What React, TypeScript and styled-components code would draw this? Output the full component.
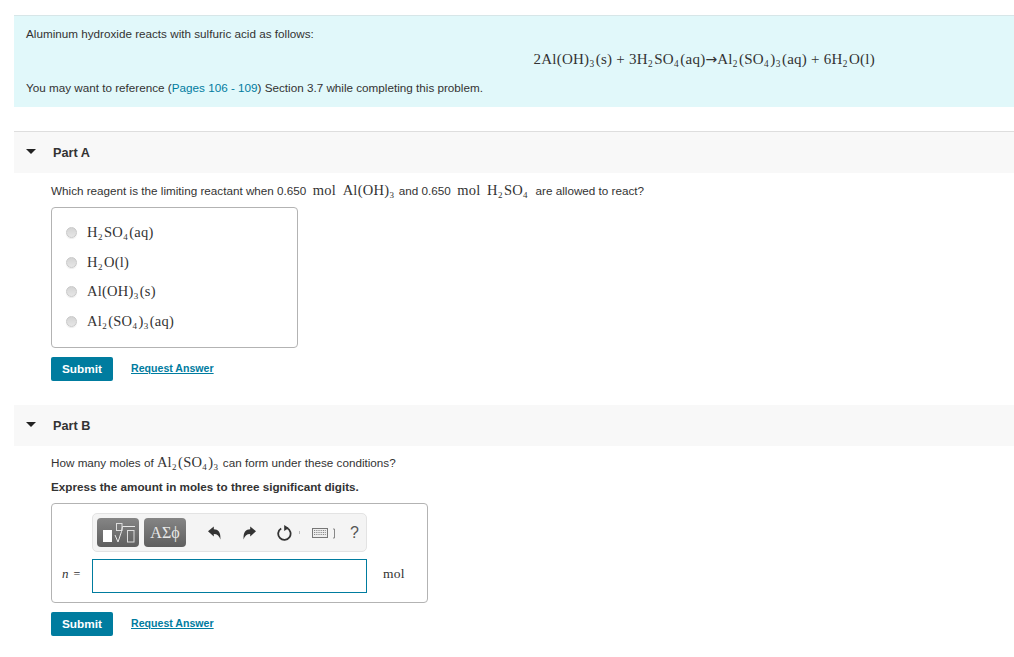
import {FC, ReactNode} from 'react'
import styled, {createGlobalStyle} from 'styled-components'

const teal = '#007c9f'

const Global = createGlobalStyle`
  html, body {
    margin: 0;
    padding: 0;
    background: #fff;
  }
  body {
    font-family: "Liberation Sans", Arial, sans-serif;
    font-size: 11.7px;
    color: #333;
  }
`

const Page = styled.div`
  width: 1014px;
  height: 657px;
  padding: 15px 0 0 14px;
  box-sizing: border-box;
  overflow: hidden;
`

const Intro = styled.section`
  height: 92px;
  box-sizing: border-box;
  background: #e1f8fa;
  border-top: 1px solid #d7e6e8;
  padding: 11px 12px 0;
  line-height: 14px;
`

const Equation = styled.div`
  display: flex;
  justify-content: flex-end;
  padding-right: 127px;
  height: 20px;
  margin-top: 8px;
  line-height: 20px;
`

const Reference = styled.p`
  margin: 12px 0 0;
`

const TextLink = styled.span`
  color: ${teal};
`

const PartHeader = styled.header<{$first?: boolean}>`
  display: flex;
  align-items: center;
  height: ${({$first}) => ($first ? 42 : 41)}px;
  box-sizing: border-box;
  background: #f8f8f8;
  border-top: ${({$first}) => ($first ? '1px solid #dedede' : 'none')};
  margin-top: 24px;
  padding-left: 12px;
  font-size: 12.7px;
  font-weight: 700;
  color: #333;
`

const Caret = styled.span`
  width: 0;
  height: 0;
  border-left: 5px solid transparent;
  border-right: 5px solid transparent;
  border-top: 5px solid #222;
  margin-right: 17px;
  position: relative;
  top: -1px;
`

const PartBody = styled.div`
  padding: 0 0 0 37px;
`

const Prompt = styled.p<{$top: number}>`
  margin: ${({$top}) => $top}px 0 0;
  height: 20px;
  line-height: 20px;
  white-space: pre;
`

const Instruction = styled.p`
  margin: 5px 0 0;
  height: 20px;
  line-height: 20px;
  font-weight: 700;
`

const MathText = styled.span<{$size?: number}>`
  font-family: "Liberation Serif", "Times New Roman", serif;
  font-size: ${({$size}) => $size ?? 14.5}px;
  color: #333;
  letter-spacing: 0.25px;
  white-space: pre;
`

const Sub = styled.sub`
  font-size: 0.62em;
  line-height: 0;
  vertical-align: -0.3em;
  margin: 0 0.14em 0 0.02em;
`

const Arrow = styled.span`
  font-family: "DejaVu Sans", sans-serif;
  font-size: 14px;
  letter-spacing: 0;
`

const OptionBox = styled.div`
  width: 247px;
  height: 141px;
  box-sizing: border-box;
  margin-top: 7px;
  border: 1px solid #b3b3b3;
  border-radius: 4px;
  padding: 10px 0 0 14px;
`

const OptionRow = styled.label`
  display: flex;
  align-items: center;
  height: 29.6px;
`

const Radio = styled.span`
  width: 9px;
  height: 9px;
  border-radius: 50%;
  border: 1px solid #c9c9c9;
  background: linear-gradient(#d4d4d4, #e6e6e6);
  box-shadow: 0 1px 1px rgba(0, 0, 0, 0.08);
  margin-right: 10px;
`

const Actions = styled.div`
  display: flex;
  align-items: center;
  margin-top: 9px;
`

const SubmitButton = styled.button`
  width: 62px;
  height: 24px;
  padding: 0;
  border: none;
  border-radius: 2px;
  background: ${teal};
  color: #fff;
  font-family: "Liberation Sans", Arial, sans-serif;
  font-size: 11.8px;
  font-weight: 700;
`

const RequestLink = styled.a`
  margin-left: 18px;
  position: relative;
  top: -1px;
  color: ${teal};
  font-size: 10.6px;
  font-weight: 700;
  text-decoration: underline;
`

const AnswerBox = styled.div`
  width: 377px;
  height: 100px;
  box-sizing: border-box;
  margin-top: 6px;
  border: 1px solid #b3b3b3;
  border-radius: 4px;
  padding: 9px 0 0 40px;
`

const Toolbar = styled.div`
  display: flex;
  align-items: center;
  width: 275px;
  height: 39px;
  box-sizing: border-box;
  background: #f4f4f4;
  border: 1px solid #e3e3e3;
  border-radius: 5px;
  padding-left: 4px;
`

const TemplateButton = styled.div`
  display: flex;
  align-items: center;
  justify-content: center;
  width: 42px;
  height: 29px;
  margin-right: 5px;
  border-radius: 4px;
  background: linear-gradient(#858585, #5f5f5f);
  color: #e8e8e8;
  font-family: "Liberation Serif", serif;
  font-size: 16px;
`

const ToolIcon = styled.svg<{$gap: number}>`
  margin-left: ${({$gap}) => $gap}px;
  flex: none;
`

const Help = styled.span`
  margin-left: 13px;
  font-size: 16px;
  color: #555;
`

const InputRow = styled.div`
  display: flex;
  align-items: center;
  margin: 7px 0 0 -30px;
`

const VarLabel = styled.span`
  width: 30px;
  margin-bottom: 4px;
  font-family: "Liberation Serif", serif;
  font-size: 12px;
  color: #333;

  i {
    font-size: 13px;
    margin-right: 2px;
  }
`

const AnswerInput = styled.div`
  width: 275px;
  height: 34px;
  box-sizing: border-box;
  border: 1px solid ${teal};
  background: #fff;
`

const Unit = styled.span`
  margin: 0 0 4px 16px;
`

const M: FC<{children: ReactNode; size?: number}> = ({children, size}) => (
  <MathText $size={size}>{children}</MathText>
)

const Option: FC<{children: ReactNode}> = ({children}) => (
  <OptionRow>
    <Radio />
    <M>{children}</M>
  </OptionRow>
)

const Submit: FC = () => (
  <Actions>
    <SubmitButton>Submit</SubmitButton>
    <RequestLink>Request Answer</RequestLink>
  </Actions>
)

const TemplateIcon = () => (
  <svg width="36" height="26" viewBox="0 0 36 26">
    <rect x="3" y="10" width="9" height="12" fill="#fff" />
    <rect x="16.5" y="3.5" width="5.5" height="7" fill="none" stroke="#ddd" />
    <path d="M15 15 L18 22 L21.5 11.5 L22.5 6.5 H35" fill="none" stroke="#e8e8e8" strokeWidth="1" />
    <rect x="27.5" y="10.5" width="6.5" height="11.5" fill="none" stroke="#ddd" />
  </svg>
)

const UndoIcon = () => (
  <ToolIcon $gap={17} width="13" height="14" viewBox="0 0 13 14">
    <path d="M0 5.2 L5.8 0.5 V3.2 C10 3.2 13 5.8 12.4 13.5 C11.4 10 9.4 8 5.8 8 V10.4 Z" fill="#333" />
  </ToolIcon>
)

const RedoIcon = () => (
  <ToolIcon $gap={22} width="13" height="14" viewBox="0 0 13 14">
    <path d="M13 5.2 L7.2 0.5 V3.2 C3 3.2 0 5.8 0.6 13.5 C1.6 10 3.6 8 7.2 8 V10.4 Z" fill="#333" />
  </ToolIcon>
)

const ResetIcon = () => (
  <ToolIcon $gap={21} width="16" height="16" viewBox="0 0 16 16">
    <path d="M9.8 3 A6.2 6.2 0 1 1 4.2 3.4" fill="none" stroke="#333" strokeWidth="1.8" />
    <path d="M7.2 0 L11.8 3 L7.2 6 Z" fill="#333" />
  </ToolIcon>
)

const KeyboardIcon = () => (
  <ToolIcon $gap={6} width="38" height="12" viewBox="0 0 38 12">
    <path d="M0.5 4 V7" stroke="#bbb" />
    <rect x="13.5" y="1.5" width="15" height="9" fill="#eee" stroke="#777" />
    <path d="M15 3.5 H27 M15 5.5 H27 M15 7.5 H27" stroke="#888" strokeDasharray="1 0.8" />
    <path d="M34 2 H35.5 V11 H34" fill="none" stroke="#888" />
  </ToolIcon>
)

export default function App() {
  return (
    <Page>
      <Global />
      <Intro>
        Aluminum hydroxide reacts with sulfuric acid as follows:
        <Equation>
          <M size={15}>
            2Al(OH)<Sub>3</Sub>(s) + 3H<Sub>2</Sub>SO<Sub>4</Sub>(aq)<Arrow>→</Arrow>Al<Sub>2</Sub>(SO<Sub>4</Sub>)<Sub>3</Sub>(aq) + 6H<Sub>2</Sub>O(l)
          </M>
        </Equation>
        <Reference>
          You may want to reference (<TextLink>Pages 106 - 109</TextLink>) Section 3.7 while completing this problem.
        </Reference>
      </Intro>

      <PartHeader $first>
        <Caret />
        Part A
      </PartHeader>
      <PartBody>
        <Prompt $top={7}>
          Which reagent is the limiting reactant when 0.650  <M>mol</M>  <M>Al(OH)<Sub>3</Sub></M> and 0.650  <M>mol</M>  <M>H<Sub>2</Sub>SO<Sub>4</Sub></M>  are allowed to react?
        </Prompt>
        <OptionBox>
          <Option>H<Sub>2</Sub>SO<Sub>4</Sub>(aq)</Option>
          <Option>H<Sub>2</Sub>O(l)</Option>
          <Option>Al(OH)<Sub>3</Sub>(s)</Option>
          <Option>Al<Sub>2</Sub>(SO<Sub>4</Sub>)<Sub>3</Sub>(aq)</Option>
        </OptionBox>
        <Submit />
      </PartBody>

      <PartHeader>
        <Caret />
        Part B
      </PartHeader>
      <PartBody>
        <Prompt $top={6}>
          How many moles of <M>Al<Sub>2</Sub>(SO<Sub>4</Sub>)<Sub>3</Sub></M> can form under these conditions?
        </Prompt>
        <Instruction>Express the amount in moles to three significant digits.</Instruction>
        <AnswerBox>
          <Toolbar>
            <TemplateButton><TemplateIcon /></TemplateButton>
            <TemplateButton>ΑΣϕ</TemplateButton>
            <UndoIcon />
            <RedoIcon />
            <ResetIcon />
            <KeyboardIcon />
            <Help>?</Help>
          </Toolbar>
          <InputRow>
            <VarLabel><i>n</i> =</VarLabel>
            <AnswerInput />
            <Unit><M size={13.5}>mol</M></Unit>
          </InputRow>
        </AnswerBox>
        <Submit />
      </PartBody>
    </Page>
  )
}
